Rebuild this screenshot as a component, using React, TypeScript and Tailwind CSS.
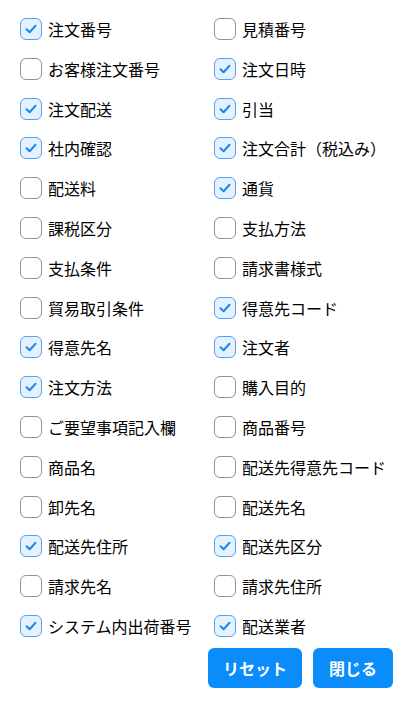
import { useState } from "react";

const items: { label: string; checked: boolean }[] = [
  { label: "注文番号", checked: true },
  { label: "見積番号", checked: false },
  { label: "お客様注文番号", checked: false },
  { label: "注文日時", checked: true },
  { label: "注文配送", checked: true },
  { label: "引当", checked: true },
  { label: "社内確認", checked: true },
  { label: "注文合計（税込み）", checked: true },
  { label: "配送料", checked: false },
  { label: "通貨", checked: true },
  { label: "課税区分", checked: false },
  { label: "支払方法", checked: false },
  { label: "支払条件", checked: false },
  { label: "請求書様式", checked: false },
  { label: "貿易取引条件", checked: false },
  { label: "得意先コード", checked: true },
  { label: "得意先名", checked: true },
  { label: "注文者", checked: true },
  { label: "注文方法", checked: true },
  { label: "購入目的", checked: false },
  { label: "ご要望事項記入欄", checked: false },
  { label: "商品番号", checked: false },
  { label: "商品名", checked: false },
  { label: "配送先得意先コード", checked: false },
  { label: "卸先名", checked: false },
  { label: "配送先名", checked: false },
  { label: "配送先住所", checked: true },
  { label: "配送先区分", checked: true },
  { label: "請求先名", checked: false },
  { label: "請求先住所", checked: false },
  { label: "システム内出荷番号", checked: true },
  { label: "配送業者", checked: true },
];

function Box({ checked }: { checked: boolean }) {
  return checked ? (
    <span className="flex h-[22px] w-[22px] shrink-0 items-center justify-center rounded-[6px] border-[1.5px] border-[#4ea3f7] bg-[#e5f1fd]">
      <svg width="14" height="14" viewBox="0 0 14 14" fill="none">
        <path d="M2.5 7.2 L5.6 10.2 L11.5 3.8" stroke="#1a88f0" strokeWidth="2" strokeLinecap="round" strokeLinejoin="round" />
      </svg>
    </span>
  ) : (
    <span className="h-[22px] w-[22px] shrink-0 rounded-[6px] border-[1.5px] border-[#8e949a] bg-white" />
  );
}

export default function App() {
  const [state, setState] = useState(items.map((i) => i.checked));
  const toggle = (idx: number) => setState((s) => s.map((v, j) => (j === idx ? !v : v)));

  return (
    <div className="min-h-[705px] bg-white font-['Noto_Sans_CJK_JP','Noto_Sans',sans-serif] text-black">
      <div className="grid grid-cols-[194px_1fr] gap-y-[17.8px] pl-5 pt-[18px]">
        {items.map((item, idx) => (
          <label key={item.label} className="flex h-[22px] cursor-pointer items-center gap-[6px] text-[16px] leading-none">
            <input type="checkbox" className="hidden" checked={state[idx]} onChange={() => toggle(idx)} />
            <Box checked={state[idx]} />
            <span className="whitespace-nowrap">{item.label}</span>
          </label>
        ))}
      </div>
      <div className="mt-[11px] flex justify-end gap-[11px] pr-[18px]">
        <button
          className="h-10 w-[94px] rounded-[6px] bg-[#0a8cfa] text-[16px] font-bold text-white"
          onClick={() => setState(items.map(() => false))}
        >
          リセット
        </button>
        <button className="h-10 w-20 rounded-[6px] bg-[#0a8cfa] text-[16px] font-bold text-white">閉じる</button>
      </div>
    </div>
  );
}
